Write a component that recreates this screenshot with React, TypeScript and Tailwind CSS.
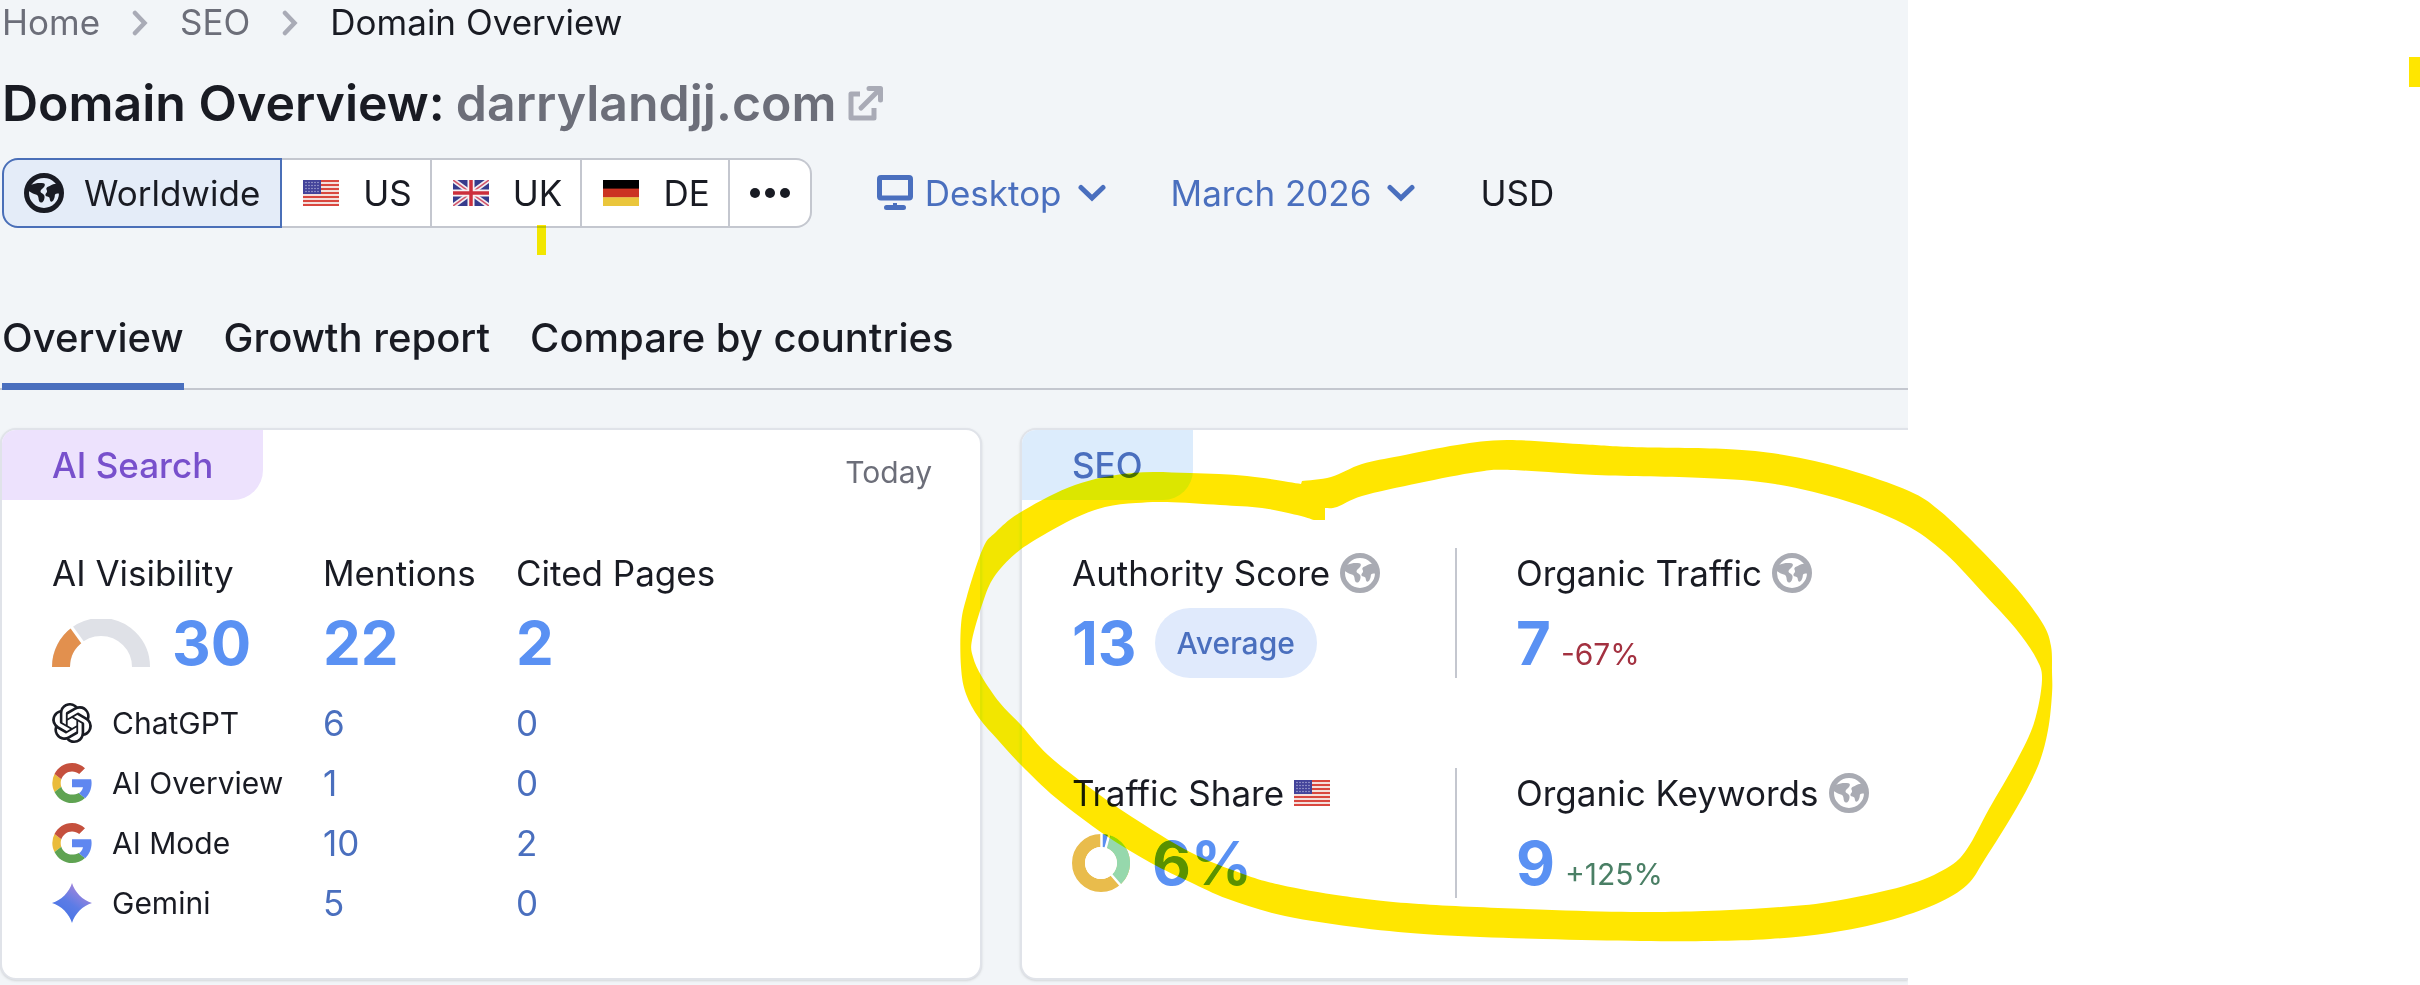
import type { ReactNode } from 'react';
import { SiOpenai } from 'react-icons/si';

type Point = [number, number];

// Smooth bezier segments running through all the points
function curve(points: Point[]) {
    let d = '';
    for (let i = 0; i < points.length - 1; i++) {
        const p0 = points[Math.max(i - 1, 0)];
        const p1 = points[i];
        const p2 = points[i + 1];
        const p3 = points[Math.min(i + 2, points.length - 1)];
        d += `C${p1[0] + (p2[0] - p0[0]) / 6} ${p1[1] + (p2[1] - p0[1]) / 6} ${p2[0] - (p3[0] - p1[0]) / 6} ${p2[1] - (p3[1] - p1[1]) / 6} ${p2[0]} ${p2[1]}`;
    }
    return d;
}

const markerOuter: Point[] = [
    [1302, 481], [1331, 477], [1362, 464], [1400, 456], [1457, 445], [1507, 440], [1579, 444], [1632, 447],
    [1726, 449], [1784, 455], [1846, 469], [1909, 491], [1940, 511], [1980, 549], [2018, 590], [2043, 624],
    [2051, 646], [2052, 672], [2052, 694], [2048, 730], [2038, 766], [2016, 809], [1985, 859], [1967, 885],
    [1936, 904], [1887, 921], [1829, 933], [1770, 939], [1712, 941], [1641, 941], [1543, 939], [1438, 935],
    [1362, 928], [1285, 916], [1228, 899], [1190, 882], [1151, 863], [1105, 835], [1056, 798], [1021, 765],
    [998, 740], [979, 718], [966, 694], [961, 667], [961, 625], [967, 596], [983, 548], [996, 532],
    [1021, 512], [1075, 485], [1132, 473], [1190, 473], [1247, 476], [1301, 484],
];

const markerInner: Point[] = [
    [1325, 508], [1337, 507], [1362, 496], [1419, 483], [1477, 472], [1511, 470], [1596, 475], [1704, 478],
    [1775, 484], [1846, 501], [1904, 524], [1945, 553], [1985, 595], [2016, 629], [2036, 658], [2042, 680],
    [2034, 723], [2016, 762], [1989, 809], [1967, 849], [1947, 868], [1904, 886], [1829, 902], [1766, 908],
    [1704, 911], [1641, 912], [1552, 910], [1419, 904], [1343, 896], [1281, 885], [1243, 874], [1190, 852],
    [1132, 817], [1086, 785], [1048, 755], [1021, 725], [1000, 703], [982, 677], [973, 657], [972, 640],
    [983, 602], [994, 577], [1015, 554], [1040, 537], [1075, 518], [1105, 507], [1136, 503], [1167, 502],
    [1220, 505], [1262, 508], [1297, 515], [1314, 520],
];

function Highlighter() {
    return (
        <svg
            className="pointer-events-none absolute top-0 left-0 mix-blend-darken"
            width="2420"
            height="985"
            viewBox="0 0 2420 985"
            fill="#ffe600"
            aria-hidden="true"
        >
            <path
                fillRule="evenodd"
                d={`M1302 481${curve(markerOuter)}ZM1325 508${curve(markerInner)}L1325 520Z`}
            />
            <path d="M537 225h9v30h-9zM2409 57h11v30h-11z" />
        </svg>
    );
}

function Globe({ className }: { className: string }) {
    return (
        <svg viewBox="0 0 40 40" className={`size-10 shrink-0 ${className}`} aria-hidden="true">
            <circle cx="20" cy="20" r="17.5" fill="none" stroke="currentColor" strokeWidth="5" />
            <path
                fill="currentColor"
                d="M4 13l4-1.5c3-1.5 8-2 11.500-1.200c1.800.5 1.700 2.200.5 3.700c-1.500 1.800-3.500 2.500-3.500 4.500c0 1.500 3 2 3.800 4c.9 2.300-.6 6.500-2.600 7c-2.300.4-3-2-3.200-4.500c-.2-2-1-3.200-3.500-3.800c-3-.7-5-2.200-7-4.200z"
            />
            <path
                fill="currentColor"
                d="M36.500 12c-3-1.300-7-1.500-9.500.3c-1.500 1-3.500 1.200-4.500 2.700c-.8 1.300 1 2.200.5 3.800c-.4 1.400-2 2-1.500 3.700c.5 1.500 3.300.7 4 2.200c.5 1.300.3 3.800 1.800 4.100c1.800.3 3.500-3.500 3.500-6.200c0-1.800 2-2.600 3.500-2l3.200 1z"
            />
        </svg>
    );
}

function FlagUS() {
    return (
        <svg viewBox="0 0 36 26" className="h-[26px] w-9 shrink-0" role="img" aria-label="US">
            <rect width="36" height="26" fill="#f3dfdc" />
            {[0, 2, 4, 6, 8, 10, 12].map((row) => (
                <rect key={row} y={row * 2} width="36" height="2" fill="#d9473f" />
            ))}
            <rect width="18" height="14" fill="#43439a" />
            {[2, 5, 8, 11].map((y) =>
                [2, 5, 8, 11, 14].map((x) => (
                    <circle key={`${x}-${y}`} cx={x + 1} cy={y + 0.5} r="0.700" fill="#b9b9dd" />
                ))
            )}
        </svg>
    );
}

function FlagUK() {
    return (
        <svg viewBox="0 0 36 26" className="h-[26px] w-9 shrink-0" aria-hidden="true">
            <rect width="36" height="26" fill="#363b8c" />
            <path d="M0 0L36 26M36 0L0 26" stroke="#f1eef3" strokeWidth="5" />
            <path d="M0 0L36 26M36 0L0 26" stroke="#d2556a" strokeWidth="1.500" />
            <path d="M18 0V26M0 13H36" stroke="#f6f1f4" strokeWidth="7" />
            <path d="M18 0V26M0 13H36" stroke="#cc2f3c" strokeWidth="3.500" />
        </svg>
    );
}

function FlagDE() {
    return (
        <svg viewBox="0 0 36 26" className="h-[26px] w-9 shrink-0" aria-hidden="true">
            <rect width="36" height="9" fill="#000" />
            <rect y="8.600" width="36" height="9" fill="#cb3422" />
            <rect y="17.300" width="36" height="8.700" fill="#eac63c" />
        </svg>
    );
}

function ChevronRight() {
    return (
        <svg viewBox="0 0 16 26" className="h-[26px] w-4 shrink-0 text-[#a9abb6]" aria-hidden="true">
            <path d="M3 3L12.500 13L3 23" fill="none" stroke="currentColor" strokeWidth="4.500" strokeLinecap="round" />
        </svg>
    );
}

function ChevronDown() {
    return (
        <svg viewBox="0 0 28 18" className="h-[18px] w-7 shrink-0" aria-hidden="true">
            <path d="M3 3.500L14 14L25 3.500" fill="none" stroke="currentColor" strokeWidth="5" strokeLinecap="round" />
        </svg>
    );
}

function ExternalLink() {
    return (
        <svg viewBox="0 0 36 36" className="size-9 text-[#a9abb6]" aria-hidden="true">
            <path d="M12 9H3V33H26V23" fill="none" stroke="currentColor" strokeWidth="5" strokeLinejoin="round" />
            <path d="M13 23L31 5" fill="none" stroke="currentColor" strokeWidth="5" strokeLinecap="round" />
            <path d="M21 3.500H32.500V15" fill="none" stroke="currentColor" strokeWidth="5" strokeLinecap="round" strokeLinejoin="round" />
        </svg>
    );
}

function Monitor() {
    return (
        <svg viewBox="0 0 36 36" className="size-9" aria-hidden="true">
            <rect x="2.500" y="2.500" width="31" height="20.500" rx="1.500" fill="none" stroke="currentColor" strokeWidth="5" />
            <path d="M16 28h4v2h6.500a2.500 2.500 0 0 1 0 5h-17a2.500 2.500 0 0 1 0-5h6.500z" fill="currentColor" />
        </svg>
    );
}

function GoogleLogo() {
    return (
        <svg viewBox="4 4 40 40" className="size-10 shrink-0" aria-hidden="true">
            <path fill="#eabb3b" d="M12.700 24c0-1.300.2-2.500.6-3.700l-6.800-5.200A20 20 0 0 0 4.300 24c0 3.200.8 6.200 2.200 8.900l6.800-5.200c-.4-1.200-.6-2.400-.6-3.700z" />
            <path fill="#c5503d" d="M24 12.400c2.800 0 5.300 1 7.200 2.600l5.800-5.800C33.500 6 29 4 24 4C16.300 4 9.700 8.500 6.500 15.100l6.800 5.200C14.900 15.700 19 12.400 24 12.400z" />
            <path fill="#5fa352" d="M24 35.600c-5 0-9.200-3.300-10.700-7.900l-6.800 5.200C9.700 39.500 16.300 44 24 44c4.900 0 9.500-1.700 13-5l-6.400-5c-1.800 1.100-4.100 1.600-6.600 1.600z" />
            <path fill="#5f87f0" d="M43.600 24c0-1.200-.2-2.500-.5-3.700H24v7.900h11c-.6 2.700-2 4.700-4.200 6l6.400 5c3.800-3.500 6.400-8.800 6.400-15.200z" />
        </svg>
    );
}

function GeminiLogo() {
    return (
        <svg viewBox="0 0 40 40" className="size-10 shrink-0" aria-hidden="true">
            <defs>
                <linearGradient id="gemini" x1="10" y1="32" x2="28" y2="6" gradientUnits="userSpaceOnUse">
                    <stop stopColor="#4c76e6" />
                    <stop offset="0.450" stopColor="#5c7ce6" />
                    <stop offset="1" stopColor="#9d84dc" />
                </linearGradient>
            </defs>
            <path fill="url(#gemini)" d="M20 0C22.500 9 31 17.500 40 20C31 22.500 22.500 31 20 40C17.500 31 9 22.500 0 20C9 17.500 17.500 9 20 0z" />
        </svg>
    );
}

function Gauge() {
    return (
        <svg viewBox="0 0 98 48" className="h-12 w-[98px] shrink-0" aria-hidden="true">
            <path d="M9 48A40 40 0 0 1 89 48" fill="none" stroke="#dfe1e7" strokeWidth="18" />
            <path d="M9 48A40 40 0 0 1 25.500 15.600" fill="none" stroke="#e2904e" strokeWidth="18" />
            <path d="M18 6L31 24" stroke="#fff" strokeWidth="3" />
        </svg>
    );
}

function Donut() {
    return (
        <svg viewBox="0 0 58 58" className="size-[58px] shrink-0" aria-hidden="true">
            <g fill="none" strokeWidth="13">
                <circle cx="29" cy="29" r="22.500" stroke="#e9bc4c" />
                <path d="M29 6.500A22.500 22.500 0 0 1 44 45.800" stroke="#96d8ac" />
                <path d="M29 6.500A22.500 22.500 0 0 1 36.500 7.800" stroke="#5b8ff0" />
            </g>
            <path d="M29.500 29V0M29.500 29L37.500 0M29 29L50 53" stroke="#fff" strokeWidth="2.500" />
            <circle cx="29" cy="29" r="16" fill="#fff" />
        </svg>
    );
}

const regions = [
    { code: 'US', flag: <FlagUS /> },
    { code: 'UK', flag: <FlagUK /> },
    { code: 'DE', flag: <FlagDE /> },
];

const engines = [
    { name: 'ChatGPT', icon: <SiOpenai className="size-10 shrink-0" />, mentions: 6, cited: 0 },
    { name: 'AI Overview', icon: <GoogleLogo />, mentions: 1, cited: 0 },
    { name: 'AI Mode', icon: <GoogleLogo />, mentions: 10, cited: 2 },
    { name: 'Gemini', icon: <GeminiLogo />, mentions: 5, cited: 0 },
];

function Metric({ label, icon, children }: { label: string; icon: ReactNode; children: ReactNode }) {
    return (
        <div>
            <h3 className="flex items-center gap-2.5 leading-[50px]">
                {label}
                {icon}
            </h3>
            <div className="mt-2.5 flex h-[70px] items-center">{children}</div>
        </div>
    );
}

function BigNumber({ children }: { children: ReactNode }) {
    return (
        <a href="#" className="text-[60px] leading-[70px] font-bold text-[#5a91f3]">
            {children}
        </a>
    );
}

export default function App() {
    return (
        <div className="relative min-h-screen overflow-hidden bg-white font-['Inter',sans-serif] text-[35px] text-[#191b23]">
            <main className="w-full max-w-[1908px] overflow-hidden bg-[#f2f5f8] pb-1.5">
                <header className="pl-0.5">
                    <nav aria-label="Breadcrumb" className="flex items-center leading-[45px]">
                        <a href="#" className="text-[#6c6e79]">Home</a>
                        <span className="mx-8 flex"><ChevronRight /></span>
                        <a href="#" className="text-[#6c6e79]">SEO</a>
                        <span className="mx-8 flex"><ChevronRight /></span>
                        <span>Domain Overview</span>
                    </nav>

                    <h1 className="mt-7 flex items-center gap-[11px] text-[50px] leading-[60px] font-semibold">
                        <span>Domain Overview:</span>
                        <span className="text-[#6c6e79]">darrylandjj.com</span>
                        <a href="#" aria-label="Open site"><ExternalLink /></a>
                    </h1>

                    <div className="mt-[25px] flex items-center gap-[65px]">
                        <div className="flex h-[70px]">
                            <button className="flex items-center gap-5 rounded-l-2xl border-2 border-[#4a6fb8] bg-[#e4ecf8] px-5">
                                <Globe className="text-[#191b23]" />
                                Worldwide
                            </button>
                            {regions.map((region) => (
                                <button
                                    key={region.code}
                                    className="flex items-center gap-6 border-y-2 border-r-2 border-[#c4c7cf] bg-white pr-[18px] pl-[21px]"
                                >
                                    {region.flag}
                                    {region.code}
                                </button>
                            ))}
                            <button
                                aria-label="More countries"
                                className="flex items-center gap-[5px] rounded-r-2xl border-y-2 border-r-2 border-[#c4c7cf] bg-white px-5"
                            >
                                <span className="size-2.5 rounded-full bg-[#191b23]" />
                                <span className="size-2.5 rounded-full bg-[#191b23]" />
                                <span className="size-2.5 rounded-full bg-[#191b23]" />
                            </button>
                        </div>
                        <button className="flex items-center text-[#4a6fbe]">
                            <Monitor />
                            <span className="mr-4 ml-3">Desktop</span>
                            <ChevronDown />
                        </button>
                        <button className="flex items-center gap-4 text-[#4a6fbe]">
                            March 2026
                            <ChevronDown />
                        </button>
                        <span>USD</span>
                    </div>
                </header>

                <nav className="mt-[85px] flex gap-10 border-b-2 border-[#c4c7cf] pl-0.5 text-[40px] leading-[50px] font-medium">
                    <a href="#" className="-mb-0.5 border-b-[7px] border-[#4a6fbe] pb-5">Overview</a>
                    <a href="#">Growth report</a>
                    <a href="#">Compare by countries</a>
                </nav>

                <div className="mt-[38px] grid grid-cols-[982fr_888fr] gap-[38px]">
                    <section className="overflow-hidden rounded-2xl border-2 border-[#e0e3e9] bg-white shadow-sm">
                        <div className="flex items-start justify-between pr-12">
                            <h2 className="rounded-br-[30px] bg-[#ede2fd] px-[50px] leading-[70px] font-medium text-[#7850cc]">
                                AI Search
                            </h2>
                            <span className="pt-[22px] text-[30px] leading-10 text-[#6c6e79]">Today</span>
                        </div>
                        <table className="mt-12 mb-[45px] ml-[50px] text-left">
                            <thead>
                                <tr className="h-[60px] align-top leading-[50px]">
                                    <th className="w-[271px] font-normal">AI Visibility</th>
                                    <th className="w-[193px] font-normal">Mentions</th>
                                    <th className="font-normal">Cited Pages</th>
                                </tr>
                            </thead>
                            <tbody>
                                <tr className="h-[85px] align-top">
                                    <td>
                                        <div className="flex h-[70px] items-center gap-[22px]">
                                            <Gauge />
                                            <BigNumber>30</BigNumber>
                                        </div>
                                    </td>
                                    <td><BigNumber>22</BigNumber></td>
                                    <td><BigNumber>2</BigNumber></td>
                                </tr>
                                {engines.map((engine) => (
                                    <tr key={engine.name} className="h-[60px] leading-[50px] text-[#4a6fbe]">
                                        <th className="font-normal text-[#191b23]">
                                            <span className="flex items-center gap-5 text-[30px]">
                                                {engine.icon}
                                                {engine.name}
                                            </span>
                                        </th>
                                        <td><a href="#">{engine.mentions}</a></td>
                                        <td><a href="#">{engine.cited}</a></td>
                                    </tr>
                                ))}
                            </tbody>
                        </table>
                    </section>

                    <section className="overflow-hidden rounded-l-2xl border-2 border-r-0 border-[#e0e3e9] bg-white shadow-sm">
                        <div className="flex">
                            <h2 className="rounded-br-[30px] bg-[#dcecfc] px-[50px] leading-[70px] font-medium text-[#4a6fbe]">
                                SEO
                            </h2>
                        </div>
                        <div className="mt-12 ml-[50px] grid grid-cols-[383px_1fr] gap-y-[90px]">
                            <Metric label="Authority Score" icon={<Globe className="text-[#a9abb3]" />}>
                                <BigNumber>13</BigNumber>
                                <span className="ml-[18px] rounded-full bg-[#e0eafc] px-[22px] text-[30px] leading-[70px] font-medium text-[#4a6fbe]">
                                    Average
                                </span>
                            </Metric>
                            <div className="border-l-2 border-[#c4c7cf] pl-[59px]">
                                <Metric label="Organic Traffic" icon={<Globe className="text-[#a9abb3]" />}>
                                    <div className="flex items-baseline gap-2.5">
                                        <BigNumber>7</BigNumber>
                                        <span className="text-[30px] text-[#a33140]">-67%</span>
                                    </div>
                                </Metric>
                            </div>
                            <Metric label="Traffic Share" icon={<FlagUS />}>
                                <Donut />
                                <span className="ml-[22px] flex"><BigNumber>6%</BigNumber></span>
                            </Metric>
                            <div className="border-l-2 border-[#c4c7cf] pl-[59px]">
                                <Metric label="Organic Keywords" icon={<Globe className="text-[#a9abb3]" />}>
                                    <div className="flex items-baseline gap-2.5">
                                        <BigNumber>9</BigNumber>
                                        <span className="text-[30px] text-[#4a7f65]">+125%</span>
                                    </div>
                                </Metric>
                            </div>
                        </div>
                    </section>
                </div>
            </main>
            <Highlighter />
        </div>
    );
}
